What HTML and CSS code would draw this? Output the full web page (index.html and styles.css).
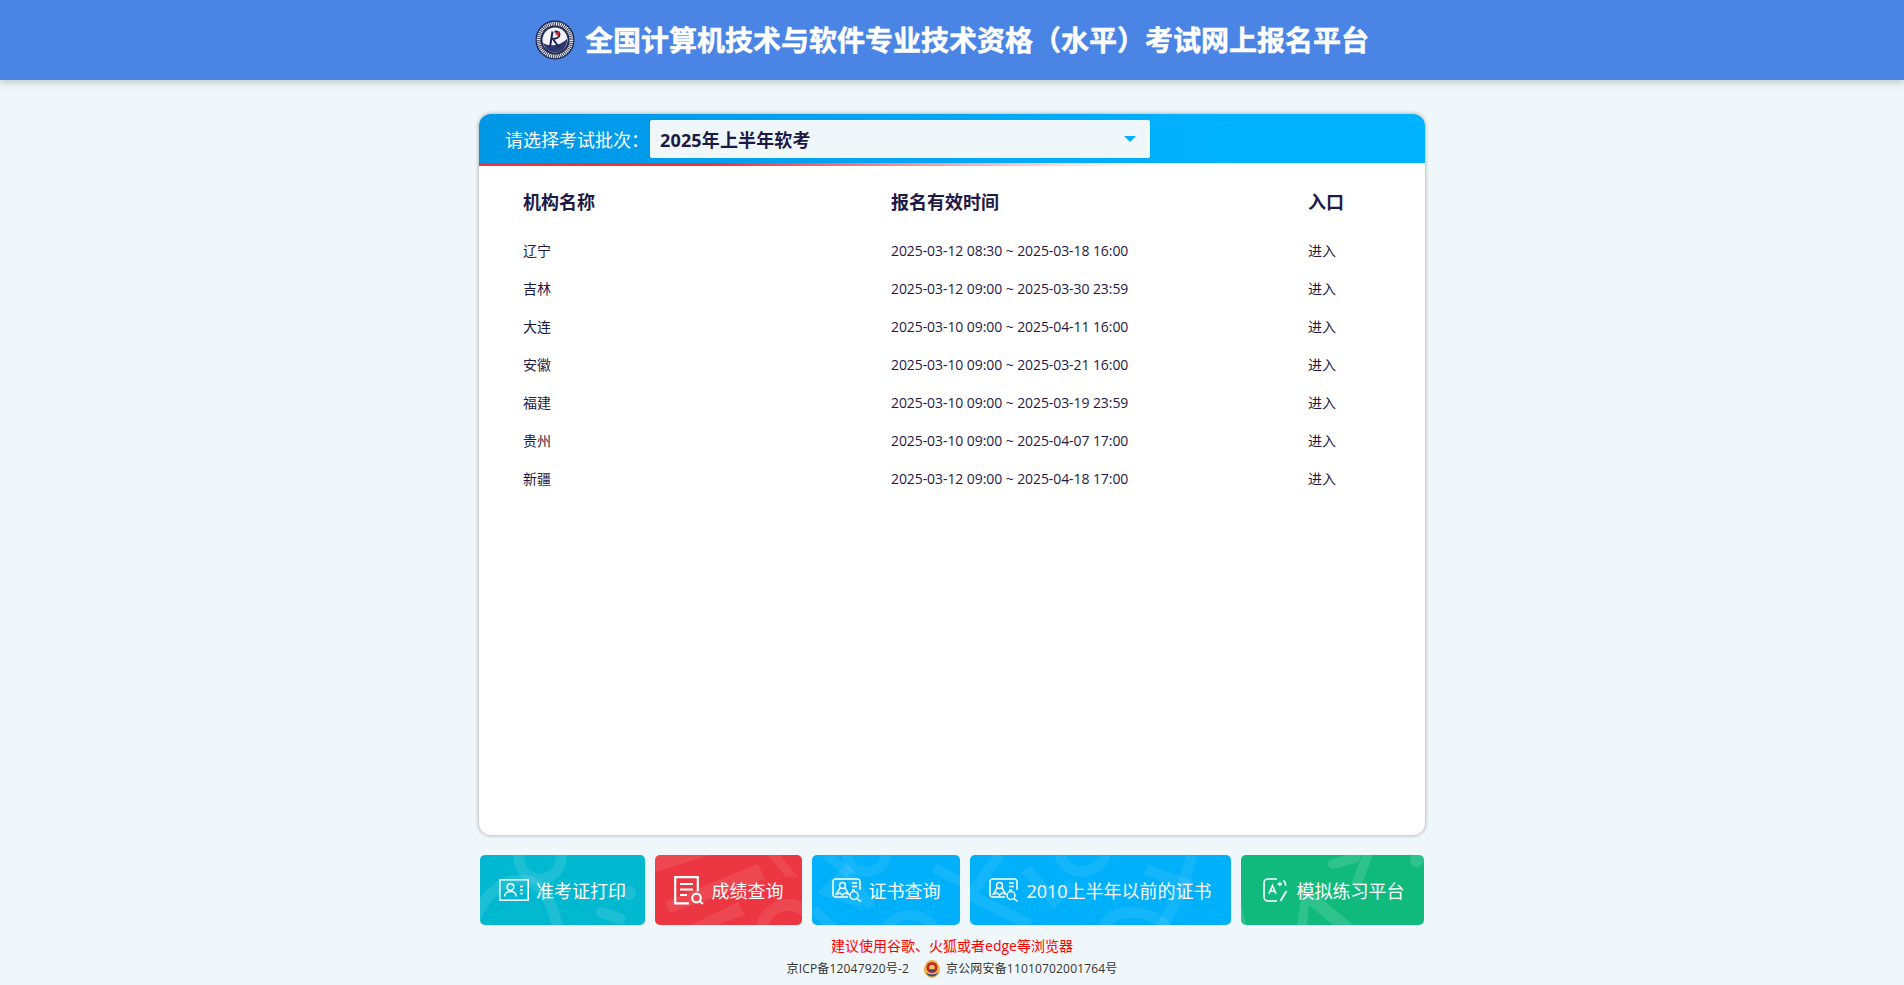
FILE: index.html
```html
<!DOCTYPE html>
<html lang="zh-CN">
<head>
<meta charset="utf-8">
<title>全国计算机技术与软件专业技术资格（水平）考试网上报名平台</title>
<link rel="stylesheet" href="styles.css">
</head>
<body>
<header class="topbar">
  <svg class="logo" viewBox="0 0 40 40" aria-hidden="true">
    <circle cx="20" cy="20" r="19.500" fill="#1a1f3d"/>
    <circle cx="20" cy="20" r="16.400" fill="none" stroke="#dfe2ec" stroke-width="3.800" stroke-dasharray="1.200 .7"/>
    <circle cx="20" cy="20" r="13.800" fill="#2a3160"/>
    <circle cx="20" cy="20" r="12.500" fill="#f2f3f7"/>
    <path d="M8 23c7 4 17 3 24-4 .6 8-5 13.500-12 13.500-5.500 0-10-3.500-12-9.500z" fill="#2e3770"/>
    <path d="M17.500 11.500L15 27M16.500 19c4 0 8-1.500 8-4.500 0-2-2-3-5-3M18 19l6 8.500" fill="none" stroke="#1d2350" stroke-width="2"/>
    <path d="M20 13.500l5-2-1.500 5z" fill="#d8262f"/>
  </svg>
  <h1 class="site-title">全国计算机技术与软件专业技术资格（水平）考试网上报名平台</h1>
</header>

<main class="page">
  <section class="card">
    <div class="card-head">
      <label class="batch-label">请选择考试批次：</label>
      <div class="batch-select">
        <span>2025年上半年软考</span>
        <i class="caret"></i>
      </div>
    </div>
    <div class="table">
      <div class="row head"><span>机构名称</span><span>报名有效时间</span><span>入口</span></div>
      <div class="row"><span>辽宁</span><span class="dates">2025-03-12 08:30 ~ 2025-03-18 16:00</span><span>进入</span></div>
      <div class="row"><span>吉林</span><span class="dates">2025-03-12 09:00 ~ 2025-03-30 23:59</span><span>进入</span></div>
      <div class="row"><span>大连</span><span class="dates">2025-03-10 09:00 ~ 2025-04-11 16:00</span><span>进入</span></div>
      <div class="row"><span>安徽</span><span class="dates">2025-03-10 09:00 ~ 2025-03-21 16:00</span><span>进入</span></div>
      <div class="row"><span>福建</span><span class="dates">2025-03-10 09:00 ~ 2025-03-19 23:59</span><span>进入</span></div>
      <div class="row"><span>贵州</span><span class="dates">2025-03-10 09:00 ~ 2025-04-07 17:00</span><span>进入</span></div>
      <div class="row"><span>新疆</span><span class="dates">2025-03-12 09:00 ~ 2025-04-18 17:00</span><span>进入</span></div>
    </div>
  </section>

  <nav class="actions">
    <a class="action teal">
      <svg class="deco" viewBox="0 0 165 70" aria-hidden="true"><g fill="none" stroke="#fff" stroke-opacity=".11" stroke-width="11" stroke-linecap="round"><circle cx="60" cy="3" r="21"/><path d="M-4 62C6 38 24 25 40 25c18 0 32 16 38 50"/><path d="M121 57l19 7"/></g><circle cx="149" cy="38" r="7" fill="#fff" fill-opacity=".11"/></svg>
      <svg class="icon icon-card" viewBox="0 0 30 22" aria-hidden="true"><g fill="none" stroke="#fff"><rect x=".8" y=".8" width="28.400" height="20.400" stroke-width="1.500"/><circle cx="11.500" cy="8" r="3.300" stroke-width="1.500"/><path d="M5.500 17.500c.5-3.500 3-5 6-5s5.500 1.500 6 5" stroke-width="1.500"/><path d="M21 7.500h3M21 11h3M21 14.500h3" stroke-width="1.500"/></g></svg>
      <span>准考证打印</span>
    </a>
    <a class="action red">
      <svg class="deco" viewBox="0 0 147 70" aria-hidden="true"><g fill="#fff" fill-opacity=".09"><path d="M0 0h56L0 17zM10 47L103 9l7 15-95 34zM36 70l47-23 7 13-28 10zM113 0h12l18 22h-12z"/></g><circle cx="133" cy="76" r="26" fill="none" stroke="#fff" stroke-opacity=".09" stroke-width="12"/></svg>
      <svg class="icon icon-doc" viewBox="0 0 30 29" aria-hidden="true"><g fill="none" stroke="#fff"><path d="M15 27.400H1.200V1.200h22.600v14" stroke-width="2.200"/><path d="M6 8h13M6 13.500h13M6 19h7" stroke-width="2"/><circle cx="22.500" cy="22" r="4.300" stroke-width="2.200"/><path d="M25.500 25l3.500 3" stroke-width="2.200"/></g></svg>
      <span>成绩查询</span>
    </a>
    <a class="action blue">
      <svg class="deco" viewBox="0 0 147 70" aria-hidden="true"><g fill="none" stroke="#fff" stroke-opacity=".08" stroke-width="10"><path d="M14 0l22 18 22 34"/><path d="M38 12L14 36 50 48"/><circle cx="54" cy="-3" r="20"/><path d="M73 75c8-20 40-20 50 0"/><path d="M122 13l28 15"/><path d="M0 54l22 20"/></g></svg>
      <svg class="icon" viewBox="0 0 30 24" aria-hidden="true"><g fill="none" stroke="#fff" stroke-width="1.500"><path d="M16 19H3.500A2.500 2.500 0 0 1 1 16.500v-13A2.500 2.500 0 0 1 3.500 1h22A2.500 2.500 0 0 1 28 3.500V12"/><circle cx="10.500" cy="7.500" r="3"/><path d="M8 10l-3.500 6 3.500-1 2.500 2 2.500-2 3.500 1-3.500-6"/><path d="M20 5h5M20 8.500h5M20 12h3"/><circle cx="22" cy="17.500" r="4"/><path d="M25 20.500l3.500 3"/></g></svg>
      <span>证书查询</span>
    </a>
    <a class="action blue">
      <svg class="deco" viewBox="0 0 261 70" aria-hidden="true"><g fill="none" stroke="#fff" stroke-opacity=".08" stroke-width="11"><path d="M30 0l-30 40 60 30"/><path d="M56 14l28 32 18-18"/><path d="M90 0c6 22 36 22 46 0"/><path d="M176 15l46 16"/><path d="M222 0l-10 35-22 40"/><path d="M132 75c8-24 50-24 66 0"/></g></svg>
      <svg class="icon" viewBox="0 0 30 24" aria-hidden="true"><g fill="none" stroke="#fff" stroke-width="1.500"><path d="M16 19H3.500A2.500 2.500 0 0 1 1 16.500v-13A2.500 2.500 0 0 1 3.500 1h22A2.500 2.500 0 0 1 28 3.500V12"/><circle cx="10.500" cy="7.500" r="3"/><path d="M8 10l-3.500 6 3.500-1 2.500 2 2.500-2 3.500 1-3.500-6"/><path d="M20 5h5M20 8.500h5M20 12h3"/><circle cx="22" cy="17.500" r="4"/><path d="M25 20.500l3.500 3"/></g></svg>
      <span>2010上半年以前的证书</span>
    </a>
    <a class="action green">
      <svg class="deco" viewBox="0 0 183 70" aria-hidden="true"><g fill="#fff" fill-opacity=".13"><path d="M0 47l5 23H0zM56 70l6-42 50 42h-20L68 50 66 70z"/></g><g fill="none" stroke="#fff" stroke-opacity=".13" stroke-width="10" stroke-linecap="round"><path d="M92 9l22-6"/><path d="M128 -4l-12 32"/></g><circle cx="176" cy="5" r="7" fill="#fff" fill-opacity=".13"/></svg>
      <svg class="icon icon-a" viewBox="0 0 24 24" aria-hidden="true"><g fill="none" stroke="#fff" stroke-width="1.600"><path d="M14 1H5a4 4 0 0 0-4 4v14a4 4 0 0 0 4 4h9"/><path d="M20 2.500a4 4 0 0 1 2.500 3.500v2"/><path d="M6 16l3.500-8.500L13 16M7.200 13.300h4.600"/><path d="M14.500 6h4.500M16.800 3.800v4.400" stroke-width="1.400"/><path d="M17.500 23l6-10" stroke-width="1.800"/></g></svg>
      <span>模拟练习平台</span>
    </a>
  </nav>

  <p class="notice">建议使用谷歌、火狐或者edge等浏览器</p>
  <footer class="record">
    <span>京ICP备12047920号-2</span>
    <span class="police">
      <svg class="badge" viewBox="0 0 18 18" aria-hidden="true">
        <path d="M9 0c3 0 5 1.500 6 3.500 2 3 3 7 1 10-1.500 2.500-4.500 4.500-7 4.500s-5.500-2-7-4.500c-2-3-1-7 1-10C4 1.500 6 0 9 0z" fill="#e9b64c"/>
        <circle cx="9" cy="7.500" r="5.500" fill="#c5262b"/>
        <circle cx="9" cy="7.500" r="2.800" fill="#f0c75a"/>
        <path d="M6.500 9.500h5v1.500h-5z" fill="#23357a"/>
        <path d="M3 12.500c3 2.500 9 2.500 12 0-1.500 3-4 4-6 4s-4.500-1-6-4z" fill="#2f4a96"/>
      </svg>
      京公网安备11010702001764号
    </span>
  </footer>
</main>
</body>
</html>
```

FILE: styles.css
```css
* { box-sizing: border-box; }

html, body { height: 100%; }

body {
  margin: 0;
  background: #eff7fa;
  color: #1e1a47;
  font-family: "Open Sans", "Noto Sans CJK SC", sans-serif;
  overflow: hidden;
}

.topbar {
  height: 80px;
  background: #4a85e6;
  box-shadow: 0 2px 8px rgba(0, 0, 0, .22);
  display: flex;
  align-items: center;
  justify-content: center;
  gap: 10px;
}

.logo { width: 40px; height: 40px; flex: none; }

.site-title {
  margin: 0;
  color: #fff;
  font-size: 28px;
  line-height: 40px;
  font-weight: 700;
  -webkit-text-stroke: .5px #fff;
}

.page {
  width: 946px;
  margin: 34px auto 0;
}

.card {
  height: 721px;
  background: #fff;
  border-radius: 12px;
  box-shadow: 0 0 4px rgba(0, 0, 0, .35);
  overflow: hidden;
}

.card-head {
  height: 52px;
  padding: 6px 0 0 27px;
  display: flex;
  align-items: flex-start;
  background: linear-gradient(to right, #0096e6, #00b2ff 80%);
  position: relative;
}

.card-head::after {
  content: "";
  position: absolute;
  left: 0;
  right: 0;
  bottom: 0;
  height: 3px;
  background: linear-gradient(to right, #ee3340 0, #ee3340 25%, #fff 70%);
}

.batch-label {
  color: #fff;
  font-size: 18px;
  line-height: 41px;
  width: 144px;
  margin-left: -1px;
  margin-right: 1px;
  white-space: nowrap;
}

.batch-select {
  width: 500px;
  height: 38px;
  background: #eff7fa;
  border-radius: 2px;
  padding: 0 11px 0 10px;
  display: flex;
  align-items: center;
  justify-content: space-between;
  font-size: 18px;
  font-weight: 700;
  letter-spacing: .15px;
  color: #1e1a47;
}

.caret {
  width: 0;
  height: 0;
  border-left: 6px solid transparent;
  border-right: 6px solid transparent;
  border-top: 6px solid #00b2ff;
  margin-right: 3px;
}

.table { padding: 4px 0 0 44px; }

.row {
  display: grid;
  grid-template-columns: 368px 417px 1fr;
  height: 38px;
  align-items: center;
  font-size: 14px;
}

.row.head {
  height: 61px;
  font-size: 18px;
  font-weight: 700;
}

.dates { letter-spacing: -.08px; }

.actions {
  width: 944px;
  margin: 20px auto 0;
  display: grid;
  grid-template-columns: 165px 147px 148px 261px 183px;
  column-gap: 10px;
}

.action {
  height: 70px;
  border-radius: 5px;
  color: #fff;
  font-size: 18px;
  display: flex;
  align-items: center;
  justify-content: center;
  gap: 7px;
  position: relative;
  overflow: hidden;
}

.action span { position: relative; }

.teal { background: #00b8cf; }
.red { background: #ec3641; }
.blue { background: #00b0fb; }
.green { background: #10ba7d; }

.deco {
  position: absolute;
  left: 0;
  top: 0;
  width: 100%;
  height: 100%;
}

.icon { position: relative; width: 30px; height: 24px; flex: none; }
.icon-card { height: 22px; }
.icon-doc { height: 29px; margin-right: 1px; }
.icon-a { width: 24px; height: 24px; margin-left: 2px; margin-right: 3px; }

.notice {
  margin: 12px 0 0;
  text-align: center;
  color: #ff0000;
  font-size: 14px;
  line-height: 18px;
}

.record {
  margin-top: 4px;
  display: flex;
  justify-content: center;
  align-items: center;
  gap: 14px;
  font-size: 12px;
  letter-spacing: .17px;
  line-height: 20px;
  color: #333;
}

.police { display: flex; align-items: center; gap: 5px; }
.badge { width: 18px; height: 18px; flex: none; }
```
